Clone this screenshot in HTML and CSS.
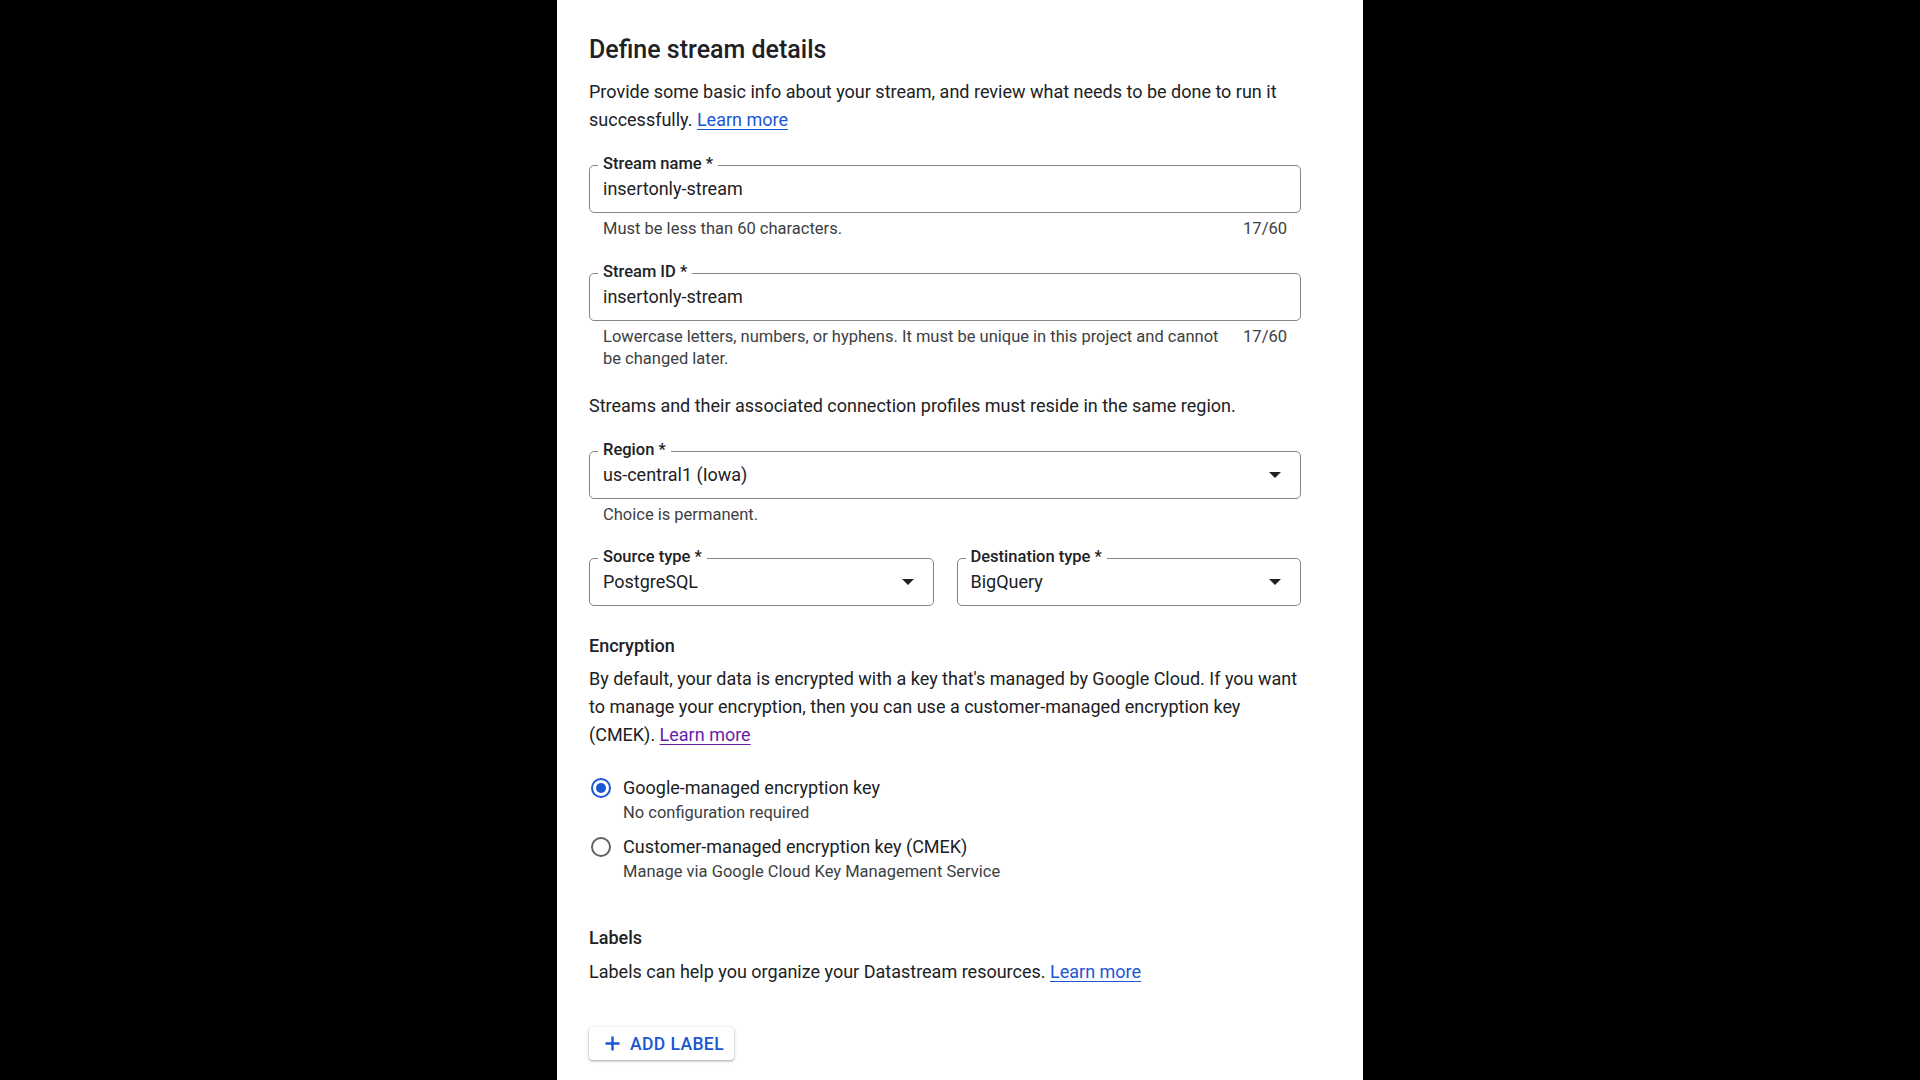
FILE: index.html
```html
<!DOCTYPE html>
<html lang="en">
<head>
<meta charset="utf-8">
<title>Define stream details</title>
<link rel="stylesheet" href="styles.css">
</head>
<body>
<main class="panel">
  <h1 class="title">Define stream details</h1>
  <p class="para">Provide some basic info about your stream, and review what needs to be done to run it successfully. <a class="link" href="#">Learn more</a></p>

  <div class="field field-first">
    <span class="flabel">Stream name *</span>
    <span class="fvalue">insertonly-stream</span>
  </div>
  <div class="helper">
    <span class="htext">Must be less than 60 characters.</span>
    <span class="hcount">17/60</span>
  </div>

  <div class="field field-id">
    <span class="flabel">Stream ID *</span>
    <span class="fvalue">insertonly-stream</span>
  </div>
  <div class="helper">
    <span class="htext">Lowercase letters, numbers, or hyphens. It must be unique in this project and cannot be changed later.</span>
    <span class="hcount">17/60</span>
  </div>

  <p class="para para-region">Streams and their associated connection profiles must reside in the same region.</p>

  <div class="field field-region">
    <span class="flabel">Region *</span>
    <span class="fvalue">us-central1 (Iowa)</span>
    <span class="arrow"></span>
  </div>
  <div class="helper">
    <span class="htext">Choice is permanent.</span>
  </div>

  <div class="row">
    <div class="field field-half">
      <span class="flabel">Source type *</span>
      <span class="fvalue">PostgreSQL</span>
      <span class="arrow"></span>
    </div>
    <div class="field field-half">
      <span class="flabel">Destination type *</span>
      <span class="fvalue">BigQuery</span>
      <span class="arrow"></span>
    </div>
  </div>

  <h2 class="subhead subhead-enc">Encryption</h2>
  <p class="para para-enc">By default, your data is encrypted with a key that's managed by Google Cloud. If you want to manage your encryption, then you can use a customer-managed encryption key (CMEK). <a class="link link-visited" href="#">Learn more</a></p>

  <div class="radios">
    <div class="radio-item">
      <span class="radio radio-on"></span>
      <div class="radio-text">
        <div class="radio-label">Google-managed encryption key</div>
        <div class="radio-sub">No configuration required</div>
      </div>
    </div>
    <div class="radio-item">
      <span class="radio"></span>
      <div class="radio-text">
        <div class="radio-label">Customer-managed encryption key (CMEK)</div>
        <div class="radio-sub">Manage via Google Cloud Key Management Service</div>
      </div>
    </div>
  </div>

  <h2 class="subhead subhead-labels">Labels</h2>
  <p class="para">Labels can help you organize your Datastream resources. <a class="link" href="#">Learn more</a></p>

  <button class="btn" type="button">
    <svg class="plus" width="17" height="17" viewBox="0 0 17 17" aria-hidden="true"><path d="M8.5 1.5v14M1.5 8.5h14" stroke="currentColor" stroke-width="2.4" fill="none"/></svg>
    <span>ADD LABEL</span>
  </button>
</main>
</body>
</html>
```
FILE: styles.css
```css
* { box-sizing: border-box; }

html, body {
  margin: 0;
  padding: 0;
  background: #000;
}

body {
  font-family: Roboto, "Liberation Sans", Arial, sans-serif;
  color: #202124;
}

.panel {
  width: 806px;
  min-height: 1080px;
  margin: 0 auto;
  background: #fff;
  padding: 34px 62px 0 32px;
}

.title {
  margin: 0;
  font-size: 25px;
  line-height: 32px;
  font-weight: 500;
  color: #202124;
}

.para {
  margin: 12px 0 0;
  font-size: 18px;
  line-height: 28px;
  color: #202124;
}

.link {
  color: #1a56d6;
  text-decoration: underline;
  text-underline-offset: 3px;
  text-decoration-thickness: 1px;
}

.link-visited { color: #681da8; }

.field {
  position: relative;
  height: 48px;
  border: 1px solid #80868b;
  border-radius: 5px;
  margin-top: 31px;
  display: flex;
  align-items: center;
  padding: 0 13px;
}

.field-id { margin-top: 33px; }

.flabel {
  position: absolute;
  left: 8px;
  top: -12px;
  padding: 0 5px;
  background: #fff;
  font-size: 16.5px;
  line-height: 20px;
  font-weight: 500;
  color: #202124;
}

.fvalue {
  font-size: 18px;
  line-height: 24px;
  color: #202124;
  flex: 1;
}

.arrow {
  width: 0;
  height: 0;
  border-left: 6.5px solid transparent;
  border-right: 6.5px solid transparent;
  border-top: 6.5px solid #202124;
  margin-right: 6px;
}

.helper {
  display: flex;
  justify-content: space-between;
  margin-top: 5px;
  padding: 0 14px;
  font-size: 16.5px;
  line-height: 22px;
  color: #3c4043;
}

.htext { flex: 1; }

.hcount {
  margin-left: 14px;
  white-space: nowrap;
}

.para-region { margin-top: 22px; }

.field-region { margin-top: 31px; }

.row {
  display: flex;
  gap: 23px;
  margin-top: 32px;
}

.row .field {
  margin-top: 0;
  flex: 1;
}

.subhead {
  margin: 0;
  font-size: 18px;
  line-height: 28px;
  font-weight: 500;
  color: #202124;
}

.subhead + .para { margin-top: 6px; }

.subhead + .para-enc { margin-top: 5px; }

.subhead-enc { margin-top: 26px; }

.radios {
  margin-top: 27px;
  display: flex;
  flex-direction: column;
  gap: 12px;
}

.radio-item {
  display: flex;
  align-items: flex-start;
  padding-left: 2px;
}

.radio {
  width: 20px;
  height: 20px;
  border: 2px solid #5f6368;
  border-radius: 50%;
  margin-top: 2px;
  margin-right: 12px;
  flex: none;
  display: flex;
  align-items: center;
  justify-content: center;
}

.radio-on { border-color: #1a56d6; }

.radio-on::after {
  content: "";
  width: 10px;
  height: 10px;
  border-radius: 50%;
  background: #1a56d6;
}

.radio-label {
  font-size: 18px;
  line-height: 24px;
  color: #202124;
}

.radio-sub {
  margin-top: 3px;
  font-size: 16.5px;
  line-height: 20px;
  color: #3c4043;
}

.subhead-labels { margin-top: 42px; }

.btn {
  margin-top: 41px;
  display: inline-flex;
  align-items: center;
  gap: 9px;
  height: 33px;
  padding: 0 10px 0 15px;
  border: none;
  border-radius: 4px;
  background: #fff;
  box-shadow: 0 1px 2px rgba(60, 64, 67, 0.3), 0 1px 3px 1px rgba(60, 64, 67, 0.15);
  font-family: Roboto, "Liberation Sans", Arial, sans-serif;
  font-size: 17.5px;
  font-weight: 500;
  letter-spacing: 0.4px;
  color: #1a56d6;
  cursor: pointer;
}

.plus { display: block; }
```
